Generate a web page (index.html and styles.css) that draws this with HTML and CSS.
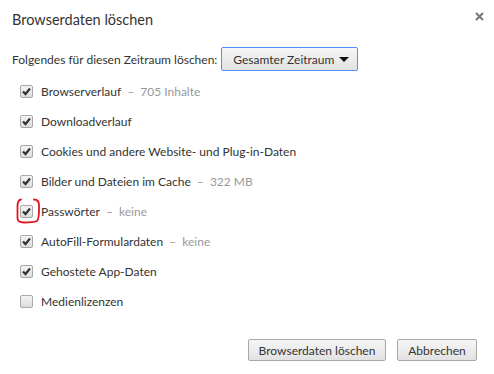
FILE: index.html
```html
<!DOCTYPE html>
<html lang="de">
  <head>
    <meta charset="UTF-8" />
    <title>Browserdaten löschen</title>
    <link rel="stylesheet" href="styles.css">
  </head>
  <body>
    <div class="dialog">
      <div class="header">
        <h1>Browserdaten löschen</h1>
        <span class="close">
          <svg width="9" height="9" viewBox="0 0 9 9">
            <path d="M1 1 L8 8 M8 1 L1 8" stroke="#777" stroke-width="2" />
          </svg>
        </span>
      </div>

      <div class="period">
        <span>Folgendes für diesen Zeitraum löschen:</span>
        <div class="select">
          <span>Gesamter Zeitraum</span>
          <span class="arrow"></span>
        </div>
      </div>

      <ul class="options">
        <li><span class="box checked"></span>Browserverlauf<span class="note">&ndash;&nbsp; 705 Inhalte</span></li>
        <li><span class="box checked"></span>Downloadverlauf</li>
        <li><span class="box checked"></span>Cookies und andere Website- und Plug-in-Daten</li>
        <li><span class="box checked"></span>Bilder und Dateien im Cache<span class="note">&ndash;&nbsp; 322 MB</span></li>
        <li class="marked">
          <span class="box checked"></span>Passwörter<span class="note">&ndash;&nbsp; keine</span>
          <svg class="circle" width="26" height="26" viewBox="0 0 26 26">
            <path d="M5 1.5 C2.5 2 1.5 4 1.5 8 L1.5 20 C1.5 23.5 3.5 24.5 8 24.5 C12 24.5 17 24.5 21 23 C23.5 21 23 12 23 7 C23 3.5 22 1.5 18 1.5"
              fill="none" stroke="#e0161c" stroke-width="1.8" stroke-linecap="round" />
          </svg>
        </li>
        <li><span class="box checked"></span>AutoFill-Formulardaten<span class="note">&ndash;&nbsp; keine</span></li>
        <li><span class="box checked"></span>Gehostete App-Daten</li>
        <li><span class="box"></span>Medienlizenzen</li>
      </ul>

      <div class="footer">
        <button class="button wide">Browserdaten löschen</button>
        <button class="button">Abbrechen</button>
      </div>
    </div>
  </body>
</html>
```

FILE: styles.css
```css
body {
  margin: 0;
  background-color: #fff;
  font-family: Lato, Arial, sans-serif;
  font-size: 12px;
  color: #333;
}
.dialog {
  width: 494px;
  height: 374px;
  padding: 0 0 0 12px;
  box-sizing: border-box;
}
.header {
  display: flex;
  justify-content: space-between;
  align-items: flex-start;
  height: 47px;
}
.header h1 {
  margin: 10px 0 0 0;
  font-size: 14.5px;
  font-weight: normal;
  line-height: 20px;
  color: #333;
}
.close {
  margin: 9px 10px 0 0;
}
.period {
  display: flex;
  align-items: center;
  height: 24px;
  white-space: nowrap;
}
.select {
  display: flex;
  align-items: center;
  justify-content: space-between;
  margin-left: 4px;
  width: 137px;
  height: 24px;
  box-sizing: border-box;
  padding: 0 8px 0 11px;
  border: 1px solid #4d90fe;
  border-radius: 2px;
  background: linear-gradient(#f6f6f6, #e2e2e2);
  color: #333;
}
.arrow {
  width: 0;
  height: 0;
  border-left: 5px solid transparent;
  border-right: 5px solid transparent;
  border-top: 5px solid #111;
}
.options {
  list-style: none;
  margin: 5px 0 0 0;
  padding: 0 0 0 8px;
}
.options li {
  position: relative;
  display: flex;
  align-items: center;
  height: 30px;
  white-space: pre;
}
.box {
  width: 13px;
  height: 13px;
  box-sizing: border-box;
  margin-right: 8px;
  border: 1px solid #a8a8a8;
  border-radius: 2px;
  background: linear-gradient(#f4f4f4, #dcdcdc);
}
.box.checked {
  background: url("data:image/svg+xml,%3Csvg xmlns='http://www.w3.org/2000/svg' width='11' height='11'%3E%3Cpath d='M2 5.5 L4.5 8 L9 2.5' fill='none' stroke='%23333' stroke-width='2.2'/%3E%3C/svg%3E") center no-repeat,
    linear-gradient(#f4f4f4, #dcdcdc);
}
.note {
  margin-left: 6px;
  color: #999;
}
.circle {
  position: absolute;
  left: -4px;
  top: 2px;
}
.footer {
  display: flex;
  justify-content: flex-end;
  gap: 11px;
  margin-top: 23px;
  padding-right: 17px;
}
.button {
  width: 80px;
  height: 22px;
  padding: 0;
  font-family: Lato, Arial, sans-serif;
  font-size: 12px;
  color: #333;
  border: 1px solid #a8a8a8;
  border-radius: 2px;
  background: linear-gradient(#f6f6f6, #e2e2e2);
}
.button.wide {
  width: 138px;
}
```
